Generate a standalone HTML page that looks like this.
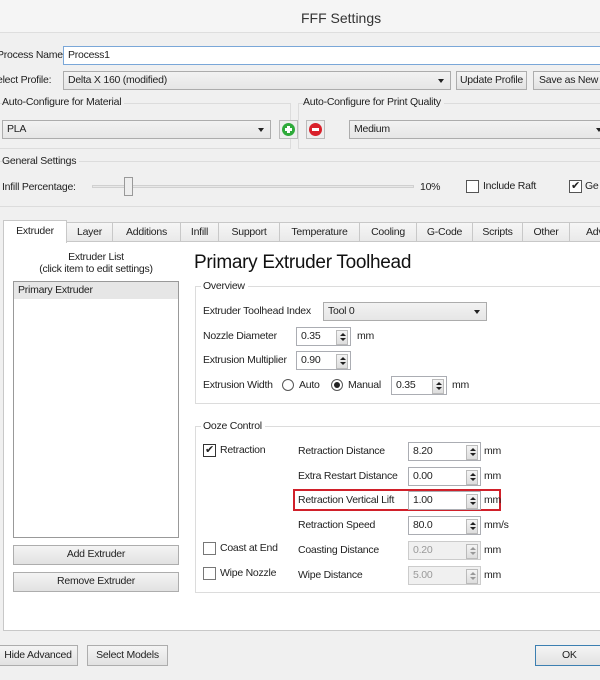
<!DOCTYPE html>
<html><head><meta charset="utf-8"><style>
*{box-sizing:border-box;margin:0;padding:0;white-space:nowrap}
body{width:600px;height:680px;overflow:hidden;background:#f0f0f0;font-family:"Liberation Sans",sans-serif;font-size:10.5px;letter-spacing:-0.25px;color:#222;position:relative}
.a{position:absolute}
.in{position:absolute;background:#fff;border:1px solid #abadb3;padding:2px 4px;line-height:13px}
.btn{position:absolute;background:linear-gradient(#f4f4f4,#e2e2e2);border:1px solid #adadad;text-align:center;line-height:17px;overflow:hidden}
.combo{position:absolute;background:linear-gradient(#f2f2f2,#e6e6e6);border:1px solid #acacac;padding:2px 4px;line-height:13px}
.combo:after{content:"";position:absolute;right:6px;top:7px;border-left:3.5px solid transparent;border-right:3.5px solid transparent;border-top:4px solid #222}
.grp{position:absolute;border:1px solid #dcdcdc}
.gl{position:absolute;background:#f0f0f0;padding-right:3px}
.tab{position:absolute;top:222px;height:19px;border:1px solid #c8c8c8;border-bottom:none;background:linear-gradient(#f6f6f6,#e9e9e9);text-align:center;line-height:18px}
.cb{position:absolute;width:13px;height:13px;border:1px solid #333;background:#fff;font-size:11px;line-height:11px;text-align:center}
.spin{position:absolute;background:#fff;border:1px solid #abadb3;height:19px;padding:2px 4px;line-height:13px}
.spin:after{content:"";position:absolute;right:2px;top:2px;width:10px;height:13px;border:1px solid #bbb;background:linear-gradient(#f4f4f4,#ddd)}
.spin i{position:absolute;right:4px;width:0;height:0;border-left:3px solid transparent;border-right:3px solid transparent;z-index:2}
.spin i.u{top:5px;border-bottom:3px solid #222}
.spin i.d{top:10px;border-top:3px solid #222}
.dis{color:#999;background:#f0f0f0}
.rad{position:absolute;width:12px;height:12px;border:1px solid #555;border-radius:50%;background:#fff}
</style></head><body>
<div class="a" style="left:0;top:0;width:600px;height:33px;background:#f5f5f5;border-bottom:1px solid #dedede"></div>
<div class="a" style="left:301px;top:10px;font-size:14px;letter-spacing:0;color:#333">FFF Settings</div>

<div class="a" style="left:-3px;top:49px">Process Name:</div>
<div class="in" style="left:63px;top:46px;width:545px;height:19px;border-color:#7aa7d8">Process1</div>
<div class="a" style="left:-3px;top:74px">elect Profile:</div>
<div class="combo" style="left:63px;top:71px;width:388px;height:19px">Delta X 160 (modified)</div>
<div class="btn" style="left:456px;top:71px;width:71px;height:19px">Update Profile</div>
<div class="btn" style="left:533px;top:71px;width:80px;height:19px;text-align:left;padding-left:5px">Save as New</div>

<div class="grp" style="left:-2px;top:103px;width:293px;height:46px"></div>
<div class="gl" style="left:2px;top:96px">Auto-Configure for Material</div>
<div class="combo" style="left:2px;top:120px;width:269px;height:19px">PLA</div>
<div class="a" style="left:279px;top:120px;width:19px;height:19px;border:1px solid #bbb;background:#eee"><div style="position:absolute;left:2px;top:2px;width:13px;height:13px;border-radius:50%;background:#2eaa3a"></div><div style="position:absolute;left:5px;top:7px;width:7px;height:3px;background:#fff"></div><div style="position:absolute;left:7px;top:5px;width:3px;height:7px;background:#fff"></div></div>
<div class="a" style="left:306px;top:120px;width:19px;height:19px;border:1px solid #bbb;background:#eee"><div style="position:absolute;left:2px;top:2px;width:13px;height:13px;border-radius:50%;background:#d9202a"></div><div style="position:absolute;left:5px;top:7px;width:7px;height:3px;background:#fff"></div></div>
<div class="grp" style="left:298px;top:103px;width:310px;height:46px"></div>
<div class="gl" style="left:303px;top:96px">Auto-Configure for Print Quality</div>
<div class="combo" style="left:349px;top:120px;width:260px;height:19px">Medium</div>

<div class="grp" style="left:-2px;top:161px;width:610px;height:46px;border-left:none;border-right:none"></div>
<div class="gl" style="left:2px;top:155px">General Settings</div>
<div class="a" style="left:2px;top:181px">Infill Percentage:</div>
<div class="a" style="left:92px;top:185px;width:322px;height:3px;border:1px solid #d0d0d0;background:#e8e8e8"></div>
<div class="a" style="left:124px;top:177px;width:9px;height:19px;border:1px solid #999;background:#eee"></div>
<div class="a" style="left:420px;top:181px">10%</div>
<div class="cb" style="left:466px;top:180px;border-color:#555"></div>
<div class="a" style="left:483px;top:180px">Include Raft</div>
<div class="cb" style="left:569px;top:180px;border-color:#555">✔</div>
<div class="a" style="left:585px;top:180px">Ge</div>

<div class="a" style="left:3px;top:241px;width:610px;height:390px;background:#fff;border:1px solid #c8c8c8"></div>
<div class="tab" style="left:66px;width:47px">Layer</div>
<div class="tab" style="left:112px;width:69px">Additions</div>
<div class="tab" style="left:180px;width:39px">Infill</div>
<div class="tab" style="left:218px;width:62px">Support</div>
<div class="tab" style="left:279px;width:81px">Temperature</div>
<div class="tab" style="left:359px;width:58px">Cooling</div>
<div class="tab" style="left:416px;width:57px">G-Code</div>
<div class="tab" style="left:472px;width:51px">Scripts</div>
<div class="tab" style="left:522px;width:48px">Other</div>
<div class="tab" style="left:569px;width:45px;text-align:left;padding-left:16px">Adv</div>
<div class="tab" style="left:3px;top:220px;width:64px;height:23px;background:#fff;line-height:20px">Extruder</div>

<div class="a" style="left:13px;top:251px;width:166px;text-align:center;line-height:12px">Extruder List<br>(click item to edit settings)</div>
<div class="a" style="left:13px;top:281px;width:166px;height:257px;border:1px solid #999;background:#fff"></div>
<div class="a" style="left:14px;top:282px;width:164px;height:17px;background:#e6e6e6;padding-left:4px;line-height:17px">Primary Extruder</div>
<div class="btn" style="left:13px;top:545px;width:166px;height:20px">Add Extruder</div>
<div class="btn" style="left:13px;top:572px;width:166px;height:20px">Remove Extruder</div>

<div class="a" style="left:194px;top:252px;font-size:19px;letter-spacing:-0.3px;color:#111">Primary Extruder Toolhead</div>
<div class="grp" style="left:195px;top:286px;width:420px;height:118px;background:#fff"></div>
<div class="a" style="left:201px;top:280px;background:#fff;padding:0 3px 0 2px">Overview</div>
<div class="a" style="left:203px;top:305px">Extruder Toolhead Index</div>
<div class="combo" style="left:323px;top:302px;width:164px;height:19px">Tool 0</div>
<div class="a" style="left:203px;top:330px">Nozzle Diameter</div>
<div class="spin" style="left:296px;top:327px;width:55px">0.35<i class="u"></i><i class="d"></i></div>
<div class="a" style="left:357px;top:330px">mm</div>
<div class="a" style="left:203px;top:354px">Extrusion Multiplier</div>
<div class="spin" style="left:296px;top:351px;width:55px">0.90<i class="u"></i><i class="d"></i></div>
<div class="a" style="left:203px;top:379px">Extrusion Width</div>
<div class="rad" style="left:282px;top:379px"></div>
<div class="a" style="left:299px;top:379px">Auto</div>
<div class="rad" style="left:331px;top:379px"><div style="position:absolute;left:2px;top:2px;width:6px;height:6px;border-radius:50%;background:#222"></div></div>
<div class="a" style="left:348px;top:379px">Manual</div>
<div class="spin" style="left:391px;top:376px;width:56px">0.35<i class="u"></i><i class="d"></i></div>
<div class="a" style="left:452px;top:379px">mm</div>

<div class="grp" style="left:195px;top:426px;width:420px;height:167px;background:#fff"></div>
<div class="a" style="left:201px;top:420px;background:#fff;padding:0 3px 0 2px">Ooze Control</div>
<div class="cb" style="left:203px;top:444px">✔</div>
<div class="a" style="left:220px;top:444px">Retraction</div>
<div class="cb" style="left:203px;top:542px;border-color:#777"></div>
<div class="a" style="left:220px;top:542px">Coast at End</div>
<div class="cb" style="left:203px;top:567px;border-color:#777"></div>
<div class="a" style="left:220px;top:567px">Wipe Nozzle</div>

<div class="a" style="left:298px;top:445px">Retraction Distance</div>
<div class="spin" style="left:408px;top:442px;width:73px">8.20<i class="u"></i><i class="d"></i></div>
<div class="a" style="left:484px;top:445px">mm</div>
<div class="a" style="left:298px;top:470px">Extra Restart Distance</div>
<div class="spin" style="left:408px;top:467px;width:73px">0.00<i class="u"></i><i class="d"></i></div>
<div class="a" style="left:484px;top:470px">mm</div>
<div class="a" style="left:293px;top:489px;width:208px;height:22px;border:2px solid #d0202a"></div>
<div class="a" style="left:298px;top:494px">Retraction Vertical Lift</div>
<div class="spin" style="left:408px;top:491px;width:73px">1.00<i class="u"></i><i class="d"></i></div>
<div class="a" style="left:484px;top:494px">mm</div>
<div class="a" style="left:298px;top:519px">Retraction Speed</div>
<div class="spin" style="left:408px;top:516px;width:73px">80.0<i class="u"></i><i class="d"></i></div>
<div class="a" style="left:484px;top:519px">mm/s</div>
<div class="a" style="left:298px;top:544px">Coasting Distance</div>
<div class="spin dis" style="left:408px;top:541px;width:73px;border-color:#ccc">0.20<i class="u" style="border-bottom-color:#999"></i><i class="d" style="border-top-color:#999"></i></div>
<div class="a" style="left:484px;top:544px">mm</div>
<div class="a" style="left:298px;top:569px">Wipe Distance</div>
<div class="spin dis" style="left:408px;top:566px;width:73px;border-color:#ccc">5.00<i class="u" style="border-bottom-color:#999"></i><i class="d" style="border-top-color:#999"></i></div>
<div class="a" style="left:484px;top:569px">mm</div>

<div class="btn" style="left:-2px;top:645px;width:80px;height:21px;line-height:19px">Hide Advanced</div>
<div class="btn" style="left:87px;top:645px;width:81px;height:21px;line-height:19px">Select Models</div>
<div class="btn" style="left:535px;top:645px;width:80px;height:21px;line-height:19px;border-color:#3c7fb1;text-align:left;padding-left:26px">OK</div>
</body></html>
